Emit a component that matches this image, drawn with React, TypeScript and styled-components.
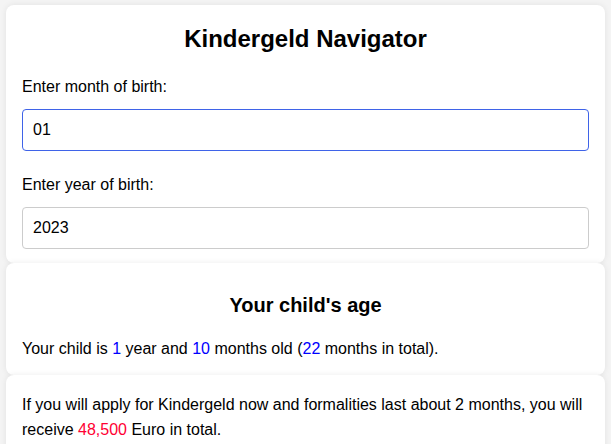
import React from "react";
import styled, { createGlobalStyle } from "styled-components";

const GlobalStyle = createGlobalStyle`
  html, body {
    margin: 0;
    padding: 0;
    background: #f4f4f4;
    font-family: "Liberation Sans", Arial, Helvetica, sans-serif;
    color: #000;
  }
  * { box-sizing: border-box; }
`;

const Page = styled.div`
  padding: 5px 6px 0 6px;
  display: flex;
  flex-direction: column;
`;

const Card = styled.section<{ $pt?: number; $pb?: number }>`
  background: #fff;
  border-radius: 8px;
  box-shadow: 0 0 6px rgba(0, 0, 0, 0.08);
  padding: ${(p) => p.$pt ?? 16}px 16px ${(p) => p.$pb ?? 16}px 16px;
`;

const Title = styled.h1`
  margin: 0 0 22px 0;
  font-size: 24px;
  line-height: 28px;
  font-weight: bold;
  text-align: center;
`;

const SubTitle = styled.h2`
  margin: 0 0 18px 0;
  font-size: 20px;
  line-height: 24px;
  font-weight: bold;
  text-align: center;
`;

const Field = styled.label`
  display: flex;
  flex-direction: column;
  gap: 10px;
  & + & {
    margin-top: 22px;
  }
`;

const LabelText = styled.span`
  font-size: 16px;
  line-height: 24px;
`;

const Input = styled.input<{ $focused?: boolean }>`
  width: 100%;
  height: 42px;
  padding: 0 10px;
  font-family: inherit;
  font-size: 16px;
  color: #000;
  border-radius: 4px;
  border: 1px solid ${(p) => (p.$focused ? "#3f63e8" : "#cccccc")};
  outline: none;
  background: #fff;
`;

const Text = styled.p<{ $lh?: number }>`
  margin: 0;
  font-size: 16px;
  line-height: ${(p) => p.$lh ?? 28}px;
`;

const Num = styled.span<{ $tone: "blue" | "red" }>`
  color: ${(p) => (p.$tone === "blue" ? "#0000ff" : "#ff0033")};
`;

export default function App() {
  return (
    <>
      <GlobalStyle />
      <Page>
        <Card $pt={20} $pb={14}>
          <Title>Kindergeld Navigator</Title>
          <Field>
            <LabelText>Enter month of birth:</LabelText>
            <Input $focused defaultValue="01" />
          </Field>
          <Field>
            <LabelText>Enter year of birth:</LabelText>
            <Input defaultValue="2023" />
          </Field>
        </Card>
        <Card $pt={30} $pb={12}>
          <SubTitle>Your child's age</SubTitle>
          <Text>
            Your child is <Num $tone="blue">1</Num> year and{" "}
            <Num $tone="blue">10</Num> months old (<Num $tone="blue">22</Num>{" "}
            months in total).
          </Text>
        </Card>
        <Card $pt={17}>
          <Text $lh={25}>
            If you will apply for Kindergeld now and formalities last about 2
            months, you will receive <Num $tone="red">48,500</Num> Euro in
            total.
          </Text>
        </Card>
      </Page>
    </>
  );
}
